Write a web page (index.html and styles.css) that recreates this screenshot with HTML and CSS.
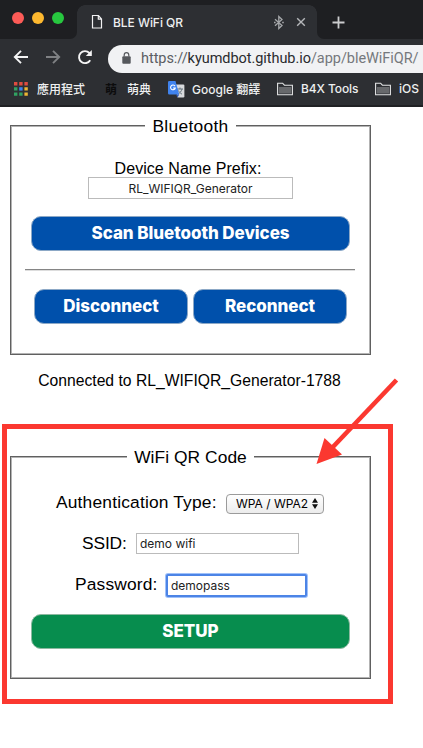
FILE: index.html
```html
<!DOCTYPE html>
<html lang="zh-Hant">
<head>
<meta charset="utf-8">
<title>BLE WiFi QR</title>
<link rel="stylesheet" href="styles.css">
</head>
<body>
<header class="browser">
  <div class="tabstrip">
    <div class="lights"><i class="red"></i><i class="amber"></i><i class="green"></i></div>
    <div class="tab">
      <svg class="page-icon" width="12" height="16" viewBox="0 0 12 16"><path d="M1.5 1.5h6l3 3.5v9h-9zM7.3 1.5V5.2h3.2" fill="none" stroke="#f1f1f2" stroke-width="1.2"/></svg>
      <span class="tab-title">BLE WiFi QR</span>
      <svg class="bt" width="10" height="15" viewBox="0 0 10 15"><path d="M1 4.2l7 6.3-3.2 3V1.5l3.2 3-7 6.3" fill="none" stroke="#a5a7aa" stroke-width="1.3"/><path d="M0 7.5h1.6M8.2 7.5h1.6" stroke="#a5a7aa" stroke-width="1.5"/></svg>
      <svg class="close" width="10" height="10" viewBox="0 0 10 10"><path d="M1.2 1.2l7.6 7.6M8.8 1.2L1.2 8.8" stroke="#b5b7ba" stroke-width="1.4"/></svg>
    </div>
    <svg class="plus" width="13" height="13" viewBox="0 0 13 13"><path d="M6.5 .5v12M.5 6.5h12" stroke="#cbccce" stroke-width="1.8"/></svg>
  </div>
  <div class="toolbar">
    <svg width="16" height="16" viewBox="0 0 16 16"><path d="M15 8H2M8 1.8L1.8 8 8 14.2" fill="none" stroke="#f4f4f5" stroke-width="1.9"/></svg>
    <svg width="16" height="16" viewBox="0 0 16 16"><path d="M1 8h13M8 1.8L14.2 8 8 14.2" fill="none" stroke="#7f8184" stroke-width="1.9"/></svg>
    <svg width="16" height="16" viewBox="0 0 16 16"><path d="M13.2 11.2A6 6 0 1 1 12.4 4l1.2 1.4" fill="none" stroke="#f4f4f5" stroke-width="1.9"/><path d="M14.8 1v6H8.8z" fill="#f4f4f5"/></svg>
    <div class="address">
      <svg class="lock" width="9" height="12" viewBox="0 0 9 12"><rect x=".3" y="4.2" width="8.4" height="7.6" rx="1" fill="#55585c"/><path d="M2.2 4.5V3a2.3 2.3 0 0 1 4.6 0v1.5" fill="none" stroke="#55585c" stroke-width="1.2"/></svg>
      <span class="url"><span class="scheme">https://</span>kyumdbot.github.io<span class="path">/app/bleWiFiQR/</span></span>
    </div>
  </div>
  <nav class="bookmarks">
    <svg class="apps" width="14" height="14" viewBox="0 0 14 14"><path d="M0 0h3.4v3.4H0zM5.2 0h3.4v3.4H5.2zM10.4 0h3.4v3.4h-3.4z" fill="#df4c40"/><path d="M0 5.2h3.4v3.4H0zM0 10.4h3.4v3.4H0zM5.2 10.4h3.4v3.4H5.2z" fill="#31a262"/><path d="M5.2 5.2h3.4v3.4H5.2z" fill="#3d83ee"/><path d="M10.4 5.2h3.4v3.4h-3.4zM10.4 10.4h3.4v3.4h-3.4z" fill="#edb634"/></svg>
    <span class="bm-apps">應用程式</span>
    <span class="moe-icon">萌</span>
    <span class="bm-moe">萌典</span>
    <svg class="translate" width="17" height="17" viewBox="0 0 17 17"><path d="M7 3.5h8.2a1.2 1.2 0 0 1 1.2 1.2v10.6a1.2 1.2 0 0 1-1.2 1.2H9.5z" fill="#d8dadd"/><path d="M9 8h6M12 6.5V8m2 0c-.6 2.3-2 4-4 5m.2-3.6c.8 1.6 2 2.6 3.8 3.8" fill="none" stroke="#687780" stroke-width="1"/><path d="M1.2 0h6.3L11.2 13.5H1.2A1.2 1.2 0 0 1 0 12.3V1.2A1.2 1.2 0 0 1 1.2 0z" fill="#4083ee"/><path d="M8 13.5h3.2l-1.7 3z" fill="#315bb5"/><path d="M7 5.1A2.4 2.4 0 1 0 7.3 7H5" fill="none" stroke="#fff" stroke-width="1.1"/></svg>
    <span class="bm-translate">Google 翻譯</span>
    <svg class="folder" width="16" height="14" viewBox="0 0 16 14"><path d="M.6 12.8V1.2h5l1.8 2h8v9.6z" fill="none" stroke="#e4e5e6" stroke-width="1.1"/><path d="M2 5h12.2v6.5H2z" fill="#67696c"/></svg>
    <span class="bm-tools">B4X Tools</span>
    <svg class="folder second" width="16" height="14" viewBox="0 0 16 14"><path d="M.6 12.8V1.2h5l1.8 2h8v9.6z" fill="none" stroke="#e4e5e6" stroke-width="1.1"/><path d="M2 5h12.2v6.5H2z" fill="#67696c"/></svg>
    <span class="bm-ios">iOS</span>
  </nav>
</header>
<main>
  <fieldset class="bluetooth">
    <legend><span class="t-bluetooth">Bluetooth</span></legend>
    <label class="prefix" for="prefix"><span>Device Name Prefix:</span></label>
    <input id="prefix" class="prefix-input" value="RL_WIFIQR_Generator">
    <button class="btn scan"><span>Scan Bluetooth Devices</span></button>
    <hr>
    <div class="pair">
      <button class="btn"><span>Disconnect</span></button>
      <button class="btn"><span>Reconnect</span></button>
    </div>
  </fieldset>
  <p class="status"><span>Connected to RL_WIFIQR_Generator-1788</span></p>
  <fieldset class="wifi">
    <legend><span class="t-wifi">WiFi QR Code</span></legend>
    <div class="row auth"><label class="t-auth">Authentication Type:</label>
      <div class="select"><span>WPA / WPA2</span><svg width="6" height="11" viewBox="0 0 6 11"><path d="M3 0l3 4.7H0zM3 11L0 6.3h6z" fill="#111"/></svg></div>
    </div>
    <div class="row ssid"><label class="t-ssid" for="ssid">SSID:</label><input id="ssid" value="demo wifi"></div>
    <div class="row pass"><label class="t-pass" for="pass">Password:</label><input id="pass" value="demopass"></div>
    <button class="btn setup"><span>SETUP</span></button>
  </fieldset>
</main>
<div class="highlight"></div>
<svg class="arrow" width="90" height="92" viewBox="0 0 90 92"><path d="M4.5 88L12.5 62 30 78.5z" fill="#fb3830"/><path d="M84.5 4L19 73" stroke="#fb3830" stroke-width="4.6"/></svg>
</body>
</html>
```

FILE: styles.css
```css
* { box-sizing: border-box; }
body { margin: 0; width: 423px; height: 748px; overflow: hidden; position: relative; background: #fff; color: #000; font-family: "Liberation Sans", Arial, sans-serif; }
svg { display: block; flex: none; }
span, label { white-space: nowrap; }
.browser { height: 107px; overflow: hidden; background: #2d2f33; border-bottom: 2px solid #202124; font-family: Inter, "Noto Sans CJK TC", sans-serif; color: #eeeff0; }
.tabstrip { height: 39px; background: linear-gradient(#2d2f33, #2d2f33) 70px 0 / 254px 39px no-repeat #1e1f22; display: flex; align-items: flex-start; }
.lights { display: flex; gap: 8px; padding: 12px 0 0 12px; width: 77px; height: 39px; border-radius: 0 0 7px 0; background: #1e1f22; flex: none; }
.lights i { width: 12px; height: 12px; border-radius: 50%; }
.red { background: #fc5b57; } .amber { background: #fdb82f; } .green { background: #27c73f; }
.tab { width: 240px; height: 39px; border-top: 5px solid #1e1f22; background: radial-gradient(circle at 8px 8px, #2d2f33 7.5px, #1e1f22 8px) 0 0 / 8px 8px no-repeat, radial-gradient(circle at 0 8px, #2d2f33 7.5px, #1e1f22 8px) 232px 0 / 8px 8px no-repeat #2d2f33; display: flex; align-items: center; padding-left: 14px; flex: none; }
.tab-title { margin-left: 10px; width: 160px; font-size: 12px; font-weight: 500; letter-spacing: -.05px; }
.bt { margin-left: 1px; }
.close { margin-left: 12px; }
.plus { box-sizing: content-box; padding: 16px 78px 10px 15px; border-radius: 0 0 0 7px; background: #1e1f22; }
.toolbar { height: 39px; display: flex; align-items: center; padding-left: 13px; gap: 16px; padding-bottom: 3px; }
.toolbar > svg { margin: -1px 0 0; }
.address { margin-left: -1px; width: 340px; flex: none; height: 28px; margin-top: 1px; border-radius: 14px 0 0 14px; background: #f1f2f4; display: flex; align-items: center; padding-left: 14px; position: relative; top: 1px; }
.lock { margin-top: -2px; }
.url { margin: -1px 0 0 10px; font: 14.5px Roboto, sans-serif; letter-spacing: -.05px; color: #292b2e; }
.scheme { color: #5b5e63; }
.path { color: #75787c; }
.bookmarks { height: 22px; display: flex; align-items: center; font-size: 12px; font-weight: 500; }
.bookmarks span { margin-top: -2px; }
.apps { margin-left: 14px; }
.bm-apps { margin-left: 9px; width: 49px; }
.moe-icon { margin-left: 19px; width: 12px; font-size: 12px; color: #0c0c0d; font-weight: 700; }
.bm-moe { margin-left: 10px; width: 25px; }
.translate { margin-left: 16px; }
.bm-translate { margin-left: 7px; width: 69px; }
.folder { margin-left: 16px; }
.bm-tools { margin-left: 8px; width: 57px; letter-spacing: -.1px; }
.folder.second { margin-left: 17px; }
.bm-ios { margin-left: 8px; }
main { width: 361px; margin-left: 10px; display: flow-root; }
fieldset { margin: 9px 0 0; min-width: 0; padding: 0 14px; border: 1px solid #606060; box-shadow: inset 1px 1px 0 #b3b3b3, inset -1px -1px 0 #b3b3b3; }
.bluetooth { height: 239px; }
legend { margin: 0 auto; height: 19px; line-height: 21px; padding: 0 7px; font-size: 17.4px; background: #fff; }
.t-bluetooth { letter-spacing: .28px; }
.t-wifi { letter-spacing: .05px; }
.prefix { display: block; height: 17px; line-height: 18px; margin: 25px 5px 0 0; text-align: center; font-size: 16px; letter-spacing: .05px; }
input { border: 1px solid #bbb; padding: 0 3px; margin: 0; color: #222; outline: 0; font: 12px Inter, sans-serif; border-radius: 0; background: #fff; display: block; }
.prefix-input { width: 205px; height: 22px; margin: 0 0 0 63px; text-align: center; }
.btn { display: block; padding: 0; border: 1px solid #8ca8c6; border-radius: 10px; background: #0050ab; color: #fff; font: 800 17px/33px Inter, sans-serif; letter-spacing: -.05px; height: 35px; }
.scan, .setup { width: 319px; margin: 17px 0 0 6px; }
hr { width: 330px; margin: 18px 0 0; height: 2px; border: 0; border-top: 1px solid #858585; background: #ddd; }
.pair { display: grid; grid-template-columns: 154px 154px; gap: 5px; margin: 18px 0 0 9px; }
.status { margin: 17px 0 0 -2px; height: 18px; line-height: 18px; font-size: 15.7px; text-align: center; }
.wifi { height: 232px; margin-top: 57px; }
.row { display: flex; align-items: center; font-size: 17.4px; }
.auth { height: 21px; margin: 27px 0 0 31px; }
.ssid { height: 21px; margin: 19px 0 0 57px; }
.pass { height: 23px; margin: 20px 0 0 50px; }
.t-auth, .t-pass { margin-top: -2px; }
.t-auth { width: 170px; letter-spacing: .17px; }
.t-ssid { width: 54px; letter-spacing: -.15px; }
.t-pass { width: 91px; letter-spacing: .14px; }
.select { width: 98px; height: 20px; border: 1px solid #9b9b9b; border-radius: 4px; background: linear-gradient(#fff, #ececec); display: flex; align-items: center; padding-left: 9px; font: 12px Inter, sans-serif; }
.select span { width: 76px; }
.ssid input { width: 163px; height: 21px; }
.pass input { width: 141px; height: 23px; border: 2px solid #4c84e6; border-radius: 2px; box-shadow: 0 0 0 1px #9fc1fa; }
.setup { margin-top: 17px; background: #078d4e; border-color: #8cb9a0; }
.highlight { position: absolute; left: 2px; top: 424px; width: 391px; height: 280px; border: 5px solid #fb3830; }
.arrow { position: absolute; left: 312px; top: 376px; }
```
